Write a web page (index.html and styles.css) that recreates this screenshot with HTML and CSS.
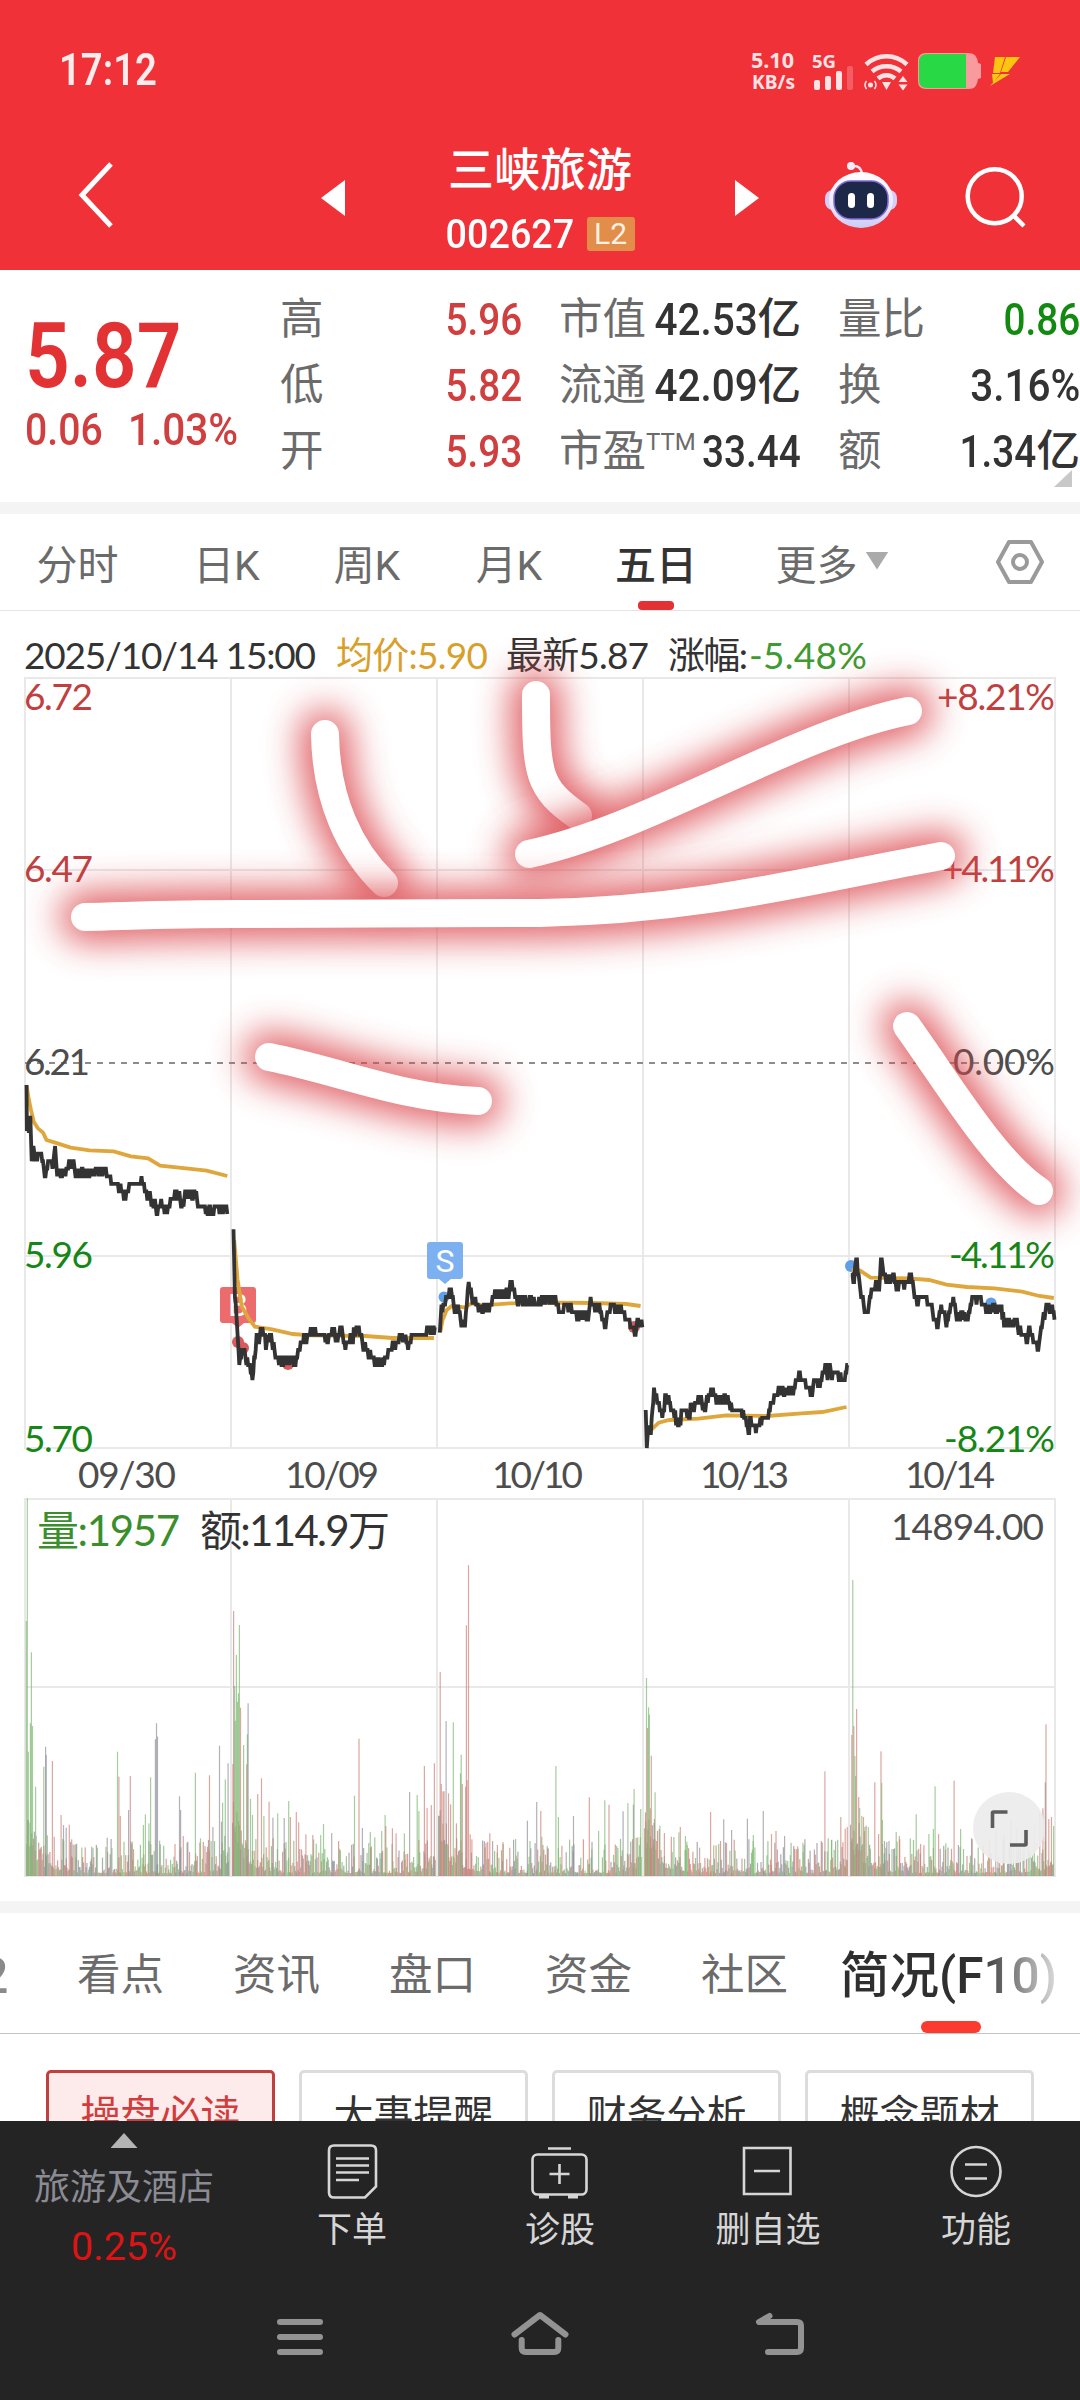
FILE: index.html
```html
<!DOCTYPE html>
<html lang="zh-CN">
  <head>
    <meta charset="UTF-8" />
    <meta name="viewport" content="width=device-width, initial-scale=1.0" />
    <title>三峡旅游 002627</title>
    <link rel="stylesheet" href="styles.css">
  </head>

  <body>
    <div class="phone">
      <header class="top">
        <div class="status">
          <span class="time">17:12</span>
          <svg class="status__icons" viewBox="740 40 300 60">
            <g fill="#ffe3e4" font-family="Noto Sans" font-weight="700">
              <text x="751" y="67.500" font-size="21" textLength="43" lengthAdjust="spacingAndGlyphs">5.10</text>
              <text x="752" y="88.500" font-size="19" textLength="43" lengthAdjust="spacingAndGlyphs">KB/s</text>
              <text x="812" y="67.500" font-size="18" textLength="24" lengthAdjust="spacingAndGlyphs">5G</text>
              <rect x="814" y="80" width="6" height="10" rx="2" />
              <rect x="825" y="76" width="6" height="14" rx="2" />
              <rect x="836" y="71" width="6" height="19" rx="2" />
              <rect x="847" y="66" width="6" height="24" rx="2" opacity="0.25" />
              <path d="M882 82h9l-4.500 8z" />
              <path d="M898.500 82h9l-4.500-6zM898.500 84.500h9l-4.500 6z" />
              <circle cx="870.500" cy="85" r="2.500" />
            </g>
            <g fill="none" stroke="#ffe3e4">
              <path stroke-width="4.500" d="M866 64.500c12-11 29-11 41 0M872 71.500c8-7 21-7 29 0M878 78.500c5-4.500 12-4.500 17 0" />
              <path stroke-width="1.500" d="M866.500 81q-3 4 0 8M874.500 81q3 4 0 8" />
            </g>
            <path fill="#f99a9e" d="M926 53h43q8 0 9 10l3 1v14l-3 1q-1 10-9 10h-43q-8 0-8-8V61q0-8 8-8z" />
            <path fill="#29d845" d="M966 54v34h-39q-8 0-8-8V62q0-8 8-8z" />
            <path fill="#fbc512" d="M995 57h10l-5 16h-7zM1006 57h14l-12 15h-7zM992 74h8l-7 9zM1001 74h9l-20 12z" />
          </svg>
        </div>
        <div class="title-bar">
          <div class="title-bar__back">
            <svg width="40" height="70" viewBox="0 0 40 70">
              <path d="M34 4L5 35l29 31" fill="none" stroke="#fff" stroke-width="5" />
            </svg>
          </div>
          <span class="tri tri--left"></span>
          <div class="stock">
            <h1>三峡旅游</h1>
            <div class="stock__code"><span>002627</span><em>L2</em></div>
          </div>
          <span class="tri tri--right"></span>
          <div class="title-bar__tools">
            <svg class="robot" viewBox="824 160 74 70">
              <defs>
                <linearGradient id="shell" x1="0" y1="0" x2="0" y2="1">
                  <stop offset="0" stop-color="#fff" />
                  <stop offset="0.600" stop-color="#ece8fb" />
                  <stop offset="1" stop-color="#c9ccf6" />
                </linearGradient>
              </defs>
              <path d="M852 166q9-1 10 8" fill="none" stroke="#f3e8fb" stroke-width="2.500" />
              <circle cx="851" cy="166" r="4" fill="#f6eefc" />
              <rect x="825" y="190" width="72" height="20" rx="8" fill="#d8cdf6" />
              <ellipse cx="861" cy="200" rx="32" ry="28" fill="url(#shell)" />
              <rect x="834" y="181" width="54" height="38" rx="17" fill="#1d2848" stroke="#8268d8" stroke-width="1.500" />
              <rect x="848" y="193" width="7" height="15" rx="3.500" fill="#fff" />
              <rect x="867" y="193" width="7" height="15" rx="3.500" fill="#fff" />
            </svg>
            <svg class="search" viewBox="964 165 64 64">
              <g fill="none" stroke="#fff" stroke-width="4.500">
                <circle cx="994.700" cy="196.300" r="27" />
                <path d="M1013 215l11 11" />
              </g>
            </svg>
          </div>
        </div>
      </header>

      <section class="quote">
        <div class="quote__price">
          <strong>5.87</strong>
          <p><span>0.06</span><span class="wide">1.03%</span></p>
        </div>
        <dl class="quote__grid">
          <div><dt>高</dt><dd class="up"><b>5.96</b></dd></div>
          <div><dt>市值</dt><dd><b class="wide">42.53</b>亿</dd></div>
          <div><dt>量比</dt><dd class="down"><b>0.86</b></dd></div>
          <div><dt>低</dt><dd class="up"><b>5.82</b></dd></div>
          <div><dt>流通</dt><dd><b class="wide">42.09</b>亿</dd></div>
          <div><dt>换</dt><dd><b class="wide">3.16%</b></dd></div>
          <div><dt>开</dt><dd class="up"><b>5.93</b></dd></div>
          <div><dt>市盈<sup>TTM</sup></dt><dd><b>33.44</b></dd></div>
          <div><dt>额</dt><dd><b>1.34</b>亿</dd></div>
        </dl>
        <i class="quote__more"></i>
      </section>

      <nav class="periods">
        <a>分时</a>
        <a>日K</a>
        <a>周K</a>
        <a>月K</a>
        <a class="active">五日</a>
        <a>更多<i></i></a>
        <a>
          <svg width="52" height="52" viewBox="0 0 52 52" fill="none" stroke="#9a9a9a" stroke-width="4">
            <path stroke-linejoin="round" d="M15 6h22l11 20-11 20H15L4 26z" />
            <circle cx="26" cy="26" r="7" />
          </svg>
        </a>
      </nav>

      <svg class="chart" viewBox="0 611 1080 1290">
        <defs>
          <filter id="glow" filterUnits="userSpaceOnUse" x="0" y="600" width="1080" height="700">
            <feGaussianBlur stdDeviation="18" />
          </filter>
        </defs>
        <g class="grid">
          <path d="M25 678H1055V1448H25zM25 870H1055M25 1256H1055M25 1499H1055V1876H25zM25 1687H1055" />
          <path d="M231 678V1448M437 678V1448M643 678V1448M849 678V1448M231 1499V1876M437 1499V1876M643 1499V1876M849 1499V1876" />
          <path class="grid__zero" d="M25 1063H1055" />
        </g>
        <g id="volume"></g>
        <g class="flag">
          <path fill="#ec6c6e" d="M223 1287h30q3 0 3 3v30q0 3-3 3h-9l-6 5-6-5h-9q-3 0-3-3v-30q0-3 3-3z" />
          <text x="238" y="1316">B</text>
          <path fill="#7db0f0" d="M430 1242h30q3 0 3 3v31q0 3-3 3h-9l-6 5-6-5h-9q-3 0-3-3v-31q0-3 3-3z" />
          <text x="445" y="1272">S</text>
        </g>
        <g fill="#d85a5e">
          <circle cx="238" cy="1342" r="6" />
          <circle cx="243" cy="1348" r="6" />
          <circle cx="288" cy="1364" r="6" />
          <circle cx="634" cy="1327" r="6" />
        </g>
        <g fill="#5f9fe8">
          <circle cx="444" cy="1297" r="5.500" />
          <circle cx="851" cy="1266" r="6" />
          <circle cx="991" cy="1303" r="5.500" />
        </g>
        <g id="average"></g>
        <g id="price"></g>

        <g class="axis">
          <text x="24" y="669" textLength="292" fill="#333">2025/10/14 15:00</text>
          <text x="336" y="669" textLength="152" fill="#d99f2b">均价:5.90</text>
          <text x="506" y="669" textLength="143" fill="#333">最新5.87</text>
          <text x="668" y="669" textLength="80" fill="#333">涨幅:</text>
          <text x="749" y="669" textLength="118" fill="#3f9a31">-5.48%</text>

          <text class="red" x="24" y="710" textLength="69">6.72</text>
          <text class="red" x="24" y="882" textLength="69">6.47</text>
          <text x="24" y="1075" textLength="66">6.21</text>
          <text class="green" x="24" y="1268" textLength="69">5.96</text>
          <text class="green" x="24" y="1451.500" textLength="69">5.70</text>

          <text class="red" x="937" y="710" textLength="118">+8.21%</text>
          <text class="red" x="942" y="882" textLength="113">+4.11%</text>
          <text x="953" y="1075" textLength="102">0.00%</text>
          <text class="green" x="949" y="1268" textLength="106">-4.11%</text>
          <text class="green" x="944" y="1451.500" textLength="111">-8.21%</text>

          <text x="78" y="1488" textLength="98">09/30</text>
          <text x="285" y="1488" textLength="94">10/09</text>
          <text x="492" y="1488" textLength="91">10/10</text>
          <text x="700" y="1488" textLength="89">10/13</text>
          <text x="905" y="1488" textLength="90">10/14</text>

          <text class="big" x="37" y="1546" textLength="143" fill="#3a8f2c">量:1957</text>
          <text class="big" x="200" y="1546" textLength="190" fill="#333">额:114.9万</text>
          <text x="891" y="1540" textLength="153">14894.00</text>
        </g>

        <g id="marks"></g>

        <g class="expand">
          <circle cx="1009" cy="1828" r="36" />
          <path d="M992.500 1828v-15q0-1 1-1h14M1026 1830v14q0 1-1 1h-15" />
        </g>
      </svg>

      <nav class="sections">
        <span class="sections__cut">2</span>
        <a>看点</a>
        <a>资讯</a>
        <a>盘口</a>
        <a>资金</a>
        <a>社区</a>
        <a class="active">简况(F10)</a>
      </nav>

      <div class="chips">
        <button class="active">操盘必读</button>
        <button>大事提醒</button>
        <button>财务分析</button>
        <button>概念题材</button>
      </div>

      <footer class="bottom">
        <div class="toolbar">
          <div class="industry">
            <i></i>
            <span>旅游及酒店</span>
            <b>0.25%</b>
          </div>
          <div class="tool">
            <svg viewBox="322 2140 60 62">
              <path d="M334 2145.500h37q5 0 5 5v36l-11 11h-31q-5 0-5-5v-42q0-5 5-5z" />
              <path d="M336 2158.500h33M336 2165.500h33M336 2172.500h33M336 2180h23" />
            </svg>
            <span>下单</span>
          </div>
          <div class="tool">
            <svg viewBox="530 2140 60 62">
              <rect x="532.500" y="2154.500" width="54" height="40" rx="5" />
              <path d="M548 2148.500h23M559.500 2164v20M549.500 2174h20" />
              <path stroke-width="4" d="M539 2196.500h10M568 2196.500h10" />
            </svg>
            <span>诊股</span>
          </div>
          <div class="tool">
            <svg viewBox="738 2140 60 62">
              <path d="M744 2148h46.500v46H744zM754 2171h26" />
            </svg>
            <span>删自选</span>
          </div>
          <div class="tool">
            <svg viewBox="946 2140 60 62">
              <circle cx="976" cy="2171.500" r="24.500" />
              <path d="M965 2164.500h22M965 2178.500h22" />
            </svg>
            <span>功能</span>
          </div>
        </div>
        <div class="sysnav">
          <svg viewBox="260 2300 80 70"><path d="M280 2322h40M280 2337h40M280 2352h40" /></svg>
          <svg viewBox="500 2300 80 70">
            <path d="M514.500 2334.500L540 2315l25.500 19.500M521.700 2340v8q0 4 4 4h28.600q4 0 4-4v-8" />
          </svg>
          <svg viewBox="740 2300 80 70">
            <path d="M769.500 2316l-10.500 6h38q4 0 4 4v22q0 4-4 4h-29" />
          </svg>
        </div>
      </footer>
    </div>
    <script src="chart.js"></script>
  </body>
</html>
```
FILE: styles.css
```css
* {
  margin: 0;
  padding: 0;
  box-sizing: border-box;
}

body {
  width: 1080px;
  background: #fff;
  font-family: "Roboto", "Noto Sans CJK SC", sans-serif;
  color: #333;
}

.phone {
  height: 2400px;
  display: flex;
  flex-direction: column;
  overflow: hidden;
}

i,
em {
  font-style: normal;
}

/* header */
.top {
  height: 270px;
  flex: none;
  background: #f13138;
  color: #fff;
}

.status {
  height: 140px;
  padding: 0 40px 0 59px;
  display: flex;
  align-items: center;
  justify-content: space-between;
}

.time {
  font-size: 43.5px;
  font-weight: 600;
  color: #ffeced;
  transform: scaleX(0.88);
  transform-origin: left;
}

.status__icons {
  width: 300px;
  height: 60px;
}

.title-bar {
  height: 130px;
  display: grid;
  grid-template-columns: 321px 24px 390px 24px 321px;
}

.title-bar__back {
  padding: 20px 0 0 77px;
}

.tri {
  height: 36px;
  margin-top: 40px;
  background: #fff;
}

.tri--left {
  clip-path: polygon(100% 0, 100% 100%, 0 50%);
}

.tri--right {
  clip-path: polygon(0 0, 0 100%, 100% 50%);
}

.stock {
  text-align: center;
}

.stock h1 {
  height: 64px;
  font-size: 46px;
  line-height: 61px;
  font-weight: 500;
}

.stock__code {
  padding: 11px 6px 0 0;
  display: flex;
  justify-content: center;
  align-items: center;
}

.stock__code span {
  width: 139px;
  font-size: 41px;
  line-height: 38px;
  font-weight: 500;
  transform: scaleX(0.92);
}

.stock__code em {
  width: 48px;
  height: 34px;
  margin-left: 8px;
  border-radius: 3px;
  background: #e28d49;
  font-size: 30px;
  line-height: 34px;
  color: #fff1e4;
}

.title-bar__tools {
  padding: 20px 0 0 65px;
  display: flex;
  gap: 66px;
}

.robot {
  width: 74px;
  height: 70px;
}

.search {
  width: 64px;
  height: 64px;
  margin-top: 5px;
}

/* quote */
.quote {
  position: relative;
  height: 244px;
  flex: none;
  display: flex;
  padding: 17px 0 0 25px;
  border-bottom: 12px solid #f4f4f4;
}

.quote__price {
  width: 255px;
  color: #e33234;
}

.quote__price strong {
  display: block;
  height: 109px;
  padding-top: 16px;
  font-size: 91px;
  line-height: 106px;
  font-weight: 600;
  transform: scaleX(0.86);
  transform-origin: left;
}

.quote__price p {
  display: flex;
  height: 60px;
  padding-top: 8px;
  font-size: 45px;
  line-height: 52px;
  font-weight: 500;
  color: #cf3f3f;
}

.quote__price span {
  width: 103px;
  transform: scaleX(0.87);
  transform-origin: left;
}

.quote__price .wide {
  transform: scaleX(0.9);
}

.quote__grid {
  flex: 1;
  display: grid;
  grid-template-columns: repeat(3, 242px);
  grid-auto-rows: 66px;
  column-gap: 37px;
}

.quote__grid div {
  display: flex;
  justify-content: space-between;
  align-items: center;
  font-size: 43.5px;
  line-height: 66px;
  white-space: nowrap;
}

.quote__grid dt {
  color: #6b6b6b;
}

.quote__grid dt sup {
  font-size: 24px;
  line-height: 0;
  vertical-align: 16px;
}

.quote__grid dd {
  display: flex;
  font-weight: 500;
}

.quote__grid b {
  margin-left: -20px;
  font-size: 45px;
  font-weight: 500;
  transform: scaleX(0.86);
  transform-origin: right;
}

.quote__grid .wide {
  transform: scaleX(0.9);
}

.up {
  color: #cf3f3f;
}

.down {
  color: #128a12;
}

.quote__more {
  position: absolute;
  right: 8px;
  bottom: 15px;
  width: 18px;
  height: 17px;
  background: #c8c8c8;
  clip-path: polygon(100% 0, 100% 100%, 0 100%);
}

/* period tabs */
.periods {
  height: 97px;
  flex: none;
  display: grid;
  grid-template-columns: 155px 143px 138px 146px 148px 204px 146px;
  border-bottom: 1px solid #e4e4e4;
  font-size: 41px;
}

.periods a {
  position: relative;
  display: flex;
  align-items: center;
  justify-content: center;
  color: #6b6b6b;
}

.periods a:last-child {
  padding-left: 25px;
}

.periods i {
  width: 23px;
  height: 18px;
  margin: 0 0 3px 8px;
  background: #aaa;
  clip-path: polygon(0 0, 100% 0, 50% 100%);
}

.periods .active {
  color: #333;
  font-weight: 500;
}

.periods .active::after {
  content: "";
  position: absolute;
  bottom: 0;
  width: 36px;
  height: 9px;
  border-radius: 4px;
  background: #e33136;
}

/* chart */
.chart {
  display: block;
  width: 1080px;
  height: 1290px;
  flex: none;
}

.grid path {
  fill: none;
  stroke: #e9e9e9;
  stroke-width: 2;
}

.grid .grid__zero {
  stroke: #8c8c8c;
  stroke-dasharray: 6 6;
}

.axis text {
  font-family: "Lato", "Noto Sans CJK SC", sans-serif;
  font-size: 37px;
}

.axis .big {
  font-size: 42px;
}

.axis text:not([fill]) {
  fill: #4d4d4d;
}

.axis .red:not([fill]) {
  fill: #c04040;
}

.axis .green:not([fill]) {
  fill: #168616;
}

.flag text {
  font-size: 32px;
  fill: #fff;
  text-anchor: middle;
}

#price path {
  fill: none;
  stroke: #333;
  stroke-width: 3.8;
}

#average path {
  fill: none;
  stroke: #dfa63c;
  stroke-width: 3.8;
}

.mark {
  fill: none;
  stroke: #fff;
  stroke-width: 28;
  stroke-linecap: round;
  stroke-linejoin: round;
}

.mark--glow {
  stroke: #dc4a50;
  stroke-width: 50;
  opacity: 0.88;
  filter: url(#glow);
}

.expand circle {
  fill: #ebebeb;
  opacity: 0.92;
}

.expand path {
  fill: none;
  stroke: #5c5c5c;
  stroke-width: 3.6;
}

/* section tabs */
.sections {
  position: relative;
  height: 133px;
  flex: none;
  display: flex;
  border-top: 12px solid #f4f4f4;
  border-bottom: 1px solid #c4c4c4;
  line-height: 126px;
  font-size: 43.5px;
  color: #6b6b6b;
  white-space: nowrap;
}

.sections__cut {
  width: 77px;
  text-indent: -20px;
  font-size: 50px;
  font-weight: 500;
  color: #8a8a8a;
}

.sections a {
  width: 156px;
}

.sections .active {
  position: relative;
  width: 222px;
  height: 120px;
  margin-left: -17px;
  font-size: 49.5px;
  font-weight: 500;
  background: linear-gradient(90deg, #2f2f2f 62%, #d8d8d8 97%);
  -webkit-background-clip: text;
  background-clip: text;
  color: transparent;
}

.sections::after {
  content: "";
  position: absolute;
  left: 921px;
  bottom: 0;
  width: 60px;
  height: 12px;
  border-radius: 6px;
  background: #fb3a30;
}

/* info chips */
.chips {
  height: 87px;
  flex: none;
  padding: 36px 46px 0;
  display: flex;
  gap: 24px;
  overflow: hidden;
}

.chips button {
  width: 229px;
  height: 92px;
  flex: none;
  border: 3px solid #dcdcdc;
  border-radius: 5px;
  background: #fff;
  font-family: inherit;
  font-size: 40px;
  line-height: 80px;
  color: #333;
}

.chips .active {
  border-color: #c04040;
  background: #fdeaea;
  color: #d23c3c;
}

/* bottom bars */
.bottom {
  flex: 1;
  background: #242424;
  color: #d6d6d6;
}

.toolbar {
  height: 169px;
  display: flex;
}

.industry {
  width: 248px;
  display: flex;
  flex-direction: column;
  align-items: center;
  padding-top: 12px;
  font-size: 36px;
}

.industry i {
  width: 27px;
  height: 15px;
  background: #b4b4b4;
  clip-path: polygon(50% 0, 100% 100%, 0 100%);
}

.industry span {
  margin-top: 15px;
  line-height: 50px;
  color: #8b8b93;
}

.industry b {
  margin-top: 11px;
  line-height: 46px;
  font-size: 39.5px;
  font-weight: 400;
  color: #dc1414;
}

.tool {
  width: 208px;
  display: flex;
  flex-direction: column;
  align-items: center;
  padding-top: 19px;
  font-size: 35px;
  line-height: 58px;
}

.tool svg {
  width: 60px;
  height: 62px;
  fill: none;
  stroke: #d6d6d6;
  stroke-width: 2.6;
}

.sysnav {
  height: 110px;
  padding: 10px 260px 0;
  display: flex;
  justify-content: space-between;
}

.sysnav svg {
  width: 80px;
  height: 70px;
  fill: none;
  stroke: #939393;
  stroke-width: 6;
  stroke-linecap: round;
  stroke-linejoin: round;
}
```
FILE: chart.js
```js
const SVG_NS = "http://www.w3.org/2000/svg";

// Series are stored on a fine plot grid, these turn them into pixels
const X_STEP = 540 / 1568;
const TICK = 7.55;
const PRICE_TOP = 1060;
const VOLUME_TOP = 1480;
const VOLUME_BASE = 1876;

const prices = [
  "77,75 78,208 86,208 88,165 92,300 97,260 103,300 115,280 125,300 132,345 145,310 155,310 160,260 166,340 190,340 203,305 214,305 222,340 265,345 285,330 305,330 318,355 340,375 362,410 378,375 398,380 411,350 425,400 445,430 457,455 468,420 478,455 495,425 513,395 528,430 540,400 565,400 572,425 590,445 600,450 645,450 652,435 660,460",
  "678,508 679,550 682,700 690,820 695,905 705,880 718,900 733,955 745,830 755,835 762,805 772,860 783,830 792,860 805,890 820,905 858,905 868,875 885,830 900,830 915,805 930,830 950,840 965,805 975,840 990,805 1003,860 1020,835 1042,805 1055,860 1075,880 1088,905 1110,905 1130,880 1150,850 1165,825 1185,860 1200,830 1235,830 1245,805 1265,810",
  "1277,818 1282,740 1295,710 1310,690 1320,750 1330,740 1340,795 1350,795 1361,665 1370,720 1385,735 1415,745 1430,715 1450,700 1475,700 1484,665 1498,715 1520,725 1550,715 1568,735 1573,720 1613,720 1623,750 1648,740 1673,765 1708,770 1715,715 1728,750 1738,740 1756,795 1773,740 1788,750 1803,745 1813,765 1828,785 1843,815 1858,785 1865,797",
  "1875,1050 1878,1158 1884,1100 1890,1110 1899,985 1911,1020 1923,1065 1934,1010 1953,1055 1971,1090 1986,1040 1998,1060 2018,1030 2033,1020 2046,1040 2060,1015 2070,990 2080,1020 2113,1010 2128,1050 2158,1060 2173,1110 2180,1080 2195,1115 2208,1080 2233,1060 2253,1000 2268,990 2288,995 2308,980 2320,935 2333,955 2356,1000 2368,965 2383,970 2396,915 2403,955 2410,920 2416,955 2423,935 2438,955 2453,950 2462,915",
  "2473,645 2480,660 2486,600 2498,680 2508,730 2518,750 2528,705 2543,670 2553,680 2558,600 2568,650 2583,670 2593,650 2603,680 2628,675 2641,645 2653,690 2663,730 2676,705 2698,725 2716,790 2723,795 2733,740 2748,795 2758,760 2768,720 2778,770 2808,770 2823,720 2843,715 2858,745 2888,745 2903,735 2918,790 2948,790 2968,820 2983,840 2990,810 3003,845 3015,865 3023,810 3038,740 3048,750 3055,735 3062,775",
];

const averages = [
  "77,75 84,120 90,150 98,185 110,205 125,218 135,240 160,248 205,263 260,271 330,274 380,289 430,295 465,317 520,323 600,332 660,348",
  "680,540 690,660 702,740 722,775 740,800 790,808 850,822 900,826 1060,828 1140,834 1260,834",
  "1279,815 1285,780 1297,750 1312,738 1350,742 1370,730 1400,736 1480,730 1618,728 1718,729 1818,732 1860,738",
  "1890,1110 1913,1088 1943,1080 2028,1076 2108,1066 2228,1068 2328,1060 2388,1056 2458,1041",
  "2473,630 2498,632 2528,653 2638,655 2698,660 2748,674 2808,681 2888,685 2968,695 3018,708 3060,714",
];

// r = bought, g = sold, k = flat
const spikes =
  "76,423,g 79,55,g 82,815,g 88,730,g 91,517,g 94,738,g 103,920,g 127,860,g 132,800,k 134,825,k 152,843,r 177,1005,r 184,1035,k 192,1043,k 201,1034,r 208,1078,r 220,1093,g 266,1100,k 311,1073,k 341,815,g 345,890,r 349,1008,r 373,990,k 378,888,r 384,1085,g 416,1035,g 422,1003,g 432,1030,g 437,892,g 451,778,k 454,730,k 457,770,k 463,1082,g 508,1092,r 521,949,k 524,990,k 532,1068,r 543,1088,k 567,878,g 582,1075,g 608,886,r 618,1041,k 637,797,k 643,1025,k 646,968,g 654,898,g 662,850,k " +
  "676,852,r 678,393,r 681,618,g 683,722,g 686,525,g 689,665,g 692,640,g 695,435,g 698,683,r 707,795,g 716,853,r 718,763,g 720,670,k 727,957,g 733,1005,g 748,942,r 759,895,r 766,1008,g 781,965,r 792,1013,k 806,1000,g 825,1014,k 838,963,g 843,1011,r 860,996,r 867,1027,r 888,1063,r 908,1065,r 931,1065,g 939,1032,g 963,1059,k 1029,947,g 1042,776,r 1052,1044,k 1075,1056,g 1088,1072,g 1108,1053,g 1118,1005,g 1120,1038,r 1139,1045,r 1150,1060,r 1174,1060,g 1189,936,k 1211,945,g 1216,993,g 1232,858,r 1240,984,r 1252,975,r 1261,850,r " +
  "1278,576,r 1281,912,r 1286,934,r 1289,934,r 1295,723,k 1302,940,r 1308,973,r 1316,727,g 1325,1030,r 1337,880,g 1339,824,g 1342,912,r 1352,920,r 1354,436,r 1356,900,r 1360,255,r 1365,1063,r 1370,1078,r 1422,1060,r 1430,1083,k 1444,1095,r 1460,1086,r 1480,1103,r 1497,1077,g 1531,1022,k 1558,966,k 1570,993,r 1573,1070,g 1590,1108,r 1614,858,g 1621,1011,g 1665,1008,k 1711,952,r 1718,1108,g 1738,1053,g 1756,961,g 1768,974,r 1790,1098,g 1809,994,k 1823,969,g 1839,974,k 1841,927,g 1847,1073,r 1860,987,g " +
  "1875,1025,r 1877,594,g 1880,744,r 1883,682,g 1885,704,g 1888,985,r 1891,827,r 1897,1078,r 1900,1017,r 1902,937,g 1916,1037,g 1929,1059,r 1971,1057,g 1975,1041,r 1990,1068,g 1995,1095,g 2031,1103,r 2063,996,r 2072,1096,g 2101,1018,k 2106,1087,k 2124,1050,k 2170,1016,k 2187,1065,g 2216,993,k 2240,1062,r 2253,1053,r 2278,1068,k 2316,1099,r 2331,1088,g 2395,874,r 2414,1080,g 2426,1084,k 2441,1011,r 2454,1046,r 2460,1041,r " +
  "2473,765,r 2476,300,g 2479,738,r 2482,828,g 2484,888,g 2487,687,r 2493,951,r 2496,984,g 2502,1008,g 2507,1011,r 2511,1041,g 2521,1041,g 2540,907,r 2551,1062,r 2558,814,r 2560,908,g 2562,1020,g 2568,1083,k 2581,1083,k 2602,1056,g 2611,1068,r 2643,1075,g 2660,1003,g 2673,1092,r 2697,1062,g 2710,1047,g 2715,919,g 2725,1062,r 2746,1090,g 2770,902,r 2789,1047,g 2821,1075,k 2891,1050,k 2915,1062,g 2935,1020,k 2952,1044,g 3003,1034,g 3019,1000,r 3028,985,r 3035,907,k 3037,733,r 3045,1017,r 3053,1011,r 3059,1038,g";

const colors = { r: "#cf8078", g: "#7fb874", k: "#909098" };

const marks = [
  "M325 734C326 800 350 850 384 883",
  "M536 695C536 775 538 788 578 816",
  "M529 854C650 828 790 735 908 711",
  "M85 917C130 916 170 914 240 914L540 913C700 910 810 880 941 856",
  "M269 1057C340 1071 400 1098 478 1101",
  "M907 1026C950 1086 995 1162 1039 1191",
];

// Same noise on every load
let seed = 2627;
function random() {
  seed = (seed * 16807) % 2147483647;
  return seed / 2147483647;
}

function draw(parent, name, attrs) {
  const el = document.createElementNS(SVG_NS, name);
  for (const key in attrs) el.setAttribute(key, attrs[key]);
  document.getElementById(parent).appendChild(el);
}

function parse(series) {
  return series.split(" ").map((p) => p.split(",").map(Number));
}

function toPixel(point) {
  return [point[0] * X_STEP, PRICE_TOP + point[1] / 3];
}

averages.forEach((series) => {
  draw("average", "path", { d: "M" + parse(series).map(toPixel).join("L") });
});

// Minute prices, rounded to one tick
prices.forEach((series) => {
  const points = parse(series).map(toPixel);
  const path = [points[0]];
  for (let i = 1; i < points.length; i++) {
    const [x0, y0] = points[i - 1];
    const [x1, y1] = points[i];
    const steps = Math.max(1, Math.round((x1 - x0) / 0.86));
    for (let s = 1; s <= steps; s++) {
      const y = y0 + ((y1 - y0) * s) / steps;
      const noise = s === steps ? 0 : (random() - 0.5) * 9;
      path.push([
        (x0 + ((x1 - x0) * s) / steps).toFixed(1),
        (1063 + Math.round((y + noise - 1063) / TICK) * TICK).toFixed(1),
      ]);
    }
  }
  draw("price", "path", { d: "M" + path.join("L") });
});

function bar(x, height, color, opacity) {
  draw("volume", "rect", {
    x: x.toFixed(1),
    y: (VOLUME_BASE - height).toFixed(1),
    width: 1.2,
    height: height.toFixed(1),
    fill: color,
    opacity: opacity,
  });
}

for (let day = 0; day < 5; day++) {
  for (let m = 0; m < 236; m++) {
    const open = Math.exp(-m / 14) * 60;
    const close = Math.exp((m - 235) / 8) * 18;
    const height = 3 + Math.pow(random(), 2.5) * 34 + (open + close) * (0.4 + random() * 0.6);
    const color = "rgk"[Math.floor(random() * 3)];
    bar(26 + day * 206 + m * 0.862, height, colors[color], 0.75);
  }
}

spikes.split(" ").forEach((spike) => {
  const [x, top, color] = spike.split(",");
  bar(x * X_STEP - 0.5, VOLUME_BASE - (VOLUME_TOP + top / 3), colors[color], 0.7);
});

marks.forEach((d) => {
  draw("marks", "path", { d: d, class: "mark mark--glow" });
  draw("marks", "path", { d: d, class: "mark" });
});
```
